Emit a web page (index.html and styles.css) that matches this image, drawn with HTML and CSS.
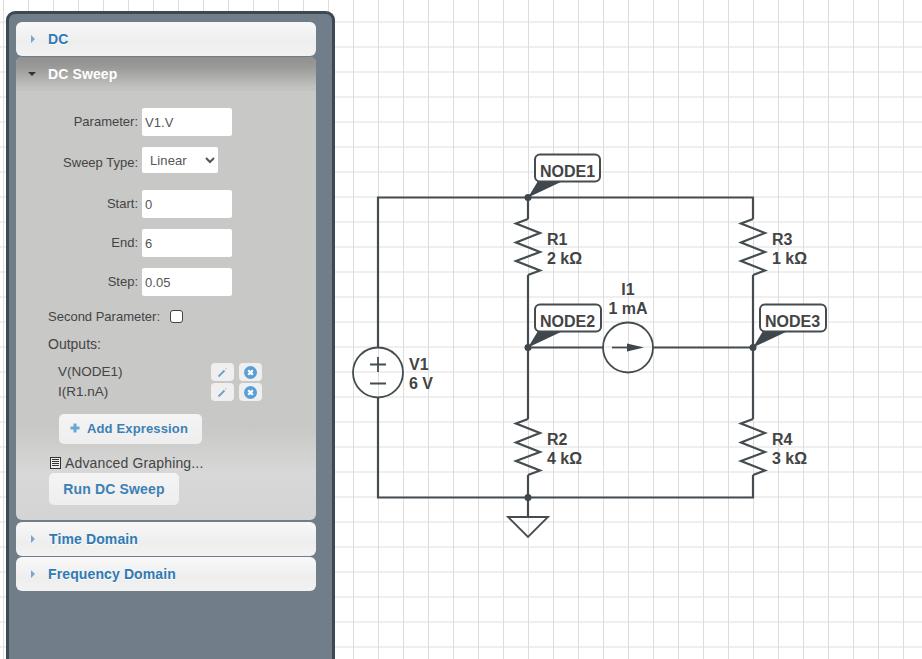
FILE: index.html
```html
<!DOCTYPE html>
<html lang="en">
<head>
    <meta charset="UTF-8">
    <title>Circuit Simulator</title>
    <link rel="stylesheet" href="styles.css">
</head>
<body>
    <aside class="panel">
        <div class="acc-header"><span class="arrow"></span><span class="acc-title">DC</span></div>

        <div class="acc-open">
            <div class="acc-open-header"><span class="arrow-down"></span><span>DC Sweep</span></div>
            <div class="form">
                <div class="row row-param"><label>Parameter:</label><input class="field" type="text" value="V1.V"></div>
                <div class="row row-select">
                    <label>Sweep Type:</label>
                    <select class="select"><option>Linear</option></select>
                </div>
                <div class="row row-start"><label>Start:</label><input class="field" type="text" value="0"></div>
                <div class="row row-end"><label>End:</label><input class="field" type="text" value="6"></div>
                <div class="row row-step"><label>Step:</label><input class="field" type="text" value="0.05"></div>
            </div>
            <div class="second">Second Parameter: <span class="check"></span></div>
            <div class="outputs-label">Outputs:</div>
            <div class="outputs">
                <div class="output">
                    <span class="output-name">V(NODE1)</span>
                    <span class="mini"><svg width="11" height="11" viewBox="0 0 11 11"><path d="M1.5 9.5 L7.5 3.5" stroke="#6f9fc6" stroke-width="1.8"/><path d="M9 1 l.6 .9 -.6 .7 -.6 -.7z" fill="#6f9fc6"/></svg></span>
                    <span class="mini"><svg width="13" height="13" viewBox="0 0 13 13"><circle cx="6.5" cy="6.5" r="6.5" fill="#5b9fd6"/><path d="M4.2 4.2 L8.8 8.8 M8.8 4.2 L4.2 8.8" stroke="#fff" stroke-width="2.2"/></svg></span>
                </div>
                <div class="output">
                    <span class="output-name">I(R1.nA)</span>
                    <span class="mini"><svg width="11" height="11" viewBox="0 0 11 11"><path d="M1.5 9.5 L7.5 3.5" stroke="#6f9fc6" stroke-width="1.8"/><path d="M9 1 l.6 .9 -.6 .7 -.6 -.7z" fill="#6f9fc6"/></svg></span>
                    <span class="mini"><svg width="13" height="13" viewBox="0 0 13 13"><circle cx="6.5" cy="6.5" r="6.5" fill="#5b9fd6"/><path d="M4.2 4.2 L8.8 8.8 M8.8 4.2 L4.2 8.8" stroke="#fff" stroke-width="2.2"/></svg></span>
                </div>
            </div>
            <button class="btn btn-add"><svg width="10" height="10" viewBox="0 0 10 10"><path d="M5 .5 V9.5 M.5 5 H9.5" stroke="#6aa5d3" stroke-width="3"/></svg>Add Expression</button>
            <div class="advanced">
                <svg width="11" height="12" viewBox="0 0 11 12"><rect x=".5" y=".5" width="10" height="11" fill="#eee" stroke="#333"/><path d="M2 2.5 H9 M2 4.5 H9 M2 6.5 H9 M2 8.5 H9" stroke="#333"/></svg>
                Advanced Graphing...
            </div>
            <button class="btn btn-run">Run DC Sweep</button>
        </div>

        <div class="acc-header acc-time"><span class="arrow"></span><span class="acc-title">Time Domain</span></div>
        <div class="acc-header acc-freq"><span class="arrow"></span><span class="acc-title">Frequency Domain</span></div>
    </aside>

    <svg class="circuit" width="587" height="659" viewBox="335 0 587 659">
        <!-- wires -->
        <g class="wire">
            <path d="M378 347.5 V197.5 H753 V219"/>
            <path d="M378 397.5 V497.5 H753 V475"/>
            <path d="M528 197.5 V219"/>
            <path d="M528 275 V419"/>
            <path d="M528 475 V517"/>
            <path d="M753 275 V419"/>
            <path d="M528 347.5 H603"/>
            <path d="M653 347.5 H753"/>
        </g>

        <!-- resistors -->
        <g class="wire">
            <path d="M528 219 L516 223.5 L540 233 L516 242.5 L540 252 L516 261 L540 270.5 L528 275"/>
            <path d="M528 419 L516 423.5 L540 433 L516 442.5 L540 452 L516 461 L540 470.5 L528 475"/>
            <path d="M753 219 L741 223.5 L765 233 L741 242.5 L765 252 L741 261 L765 270.5 L753 275"/>
            <path d="M753 419 L741 423.5 L765 433 L741 442.5 L765 452 L741 461 L765 470.5 L753 475"/>
        </g>

        <!-- V1 -->
        <g class="wire thin">
            <circle cx="378" cy="372.5" r="25"/>
            <path d="M370 364.5 H386 M378 357 V372 M370 383.5 H386"/>
        </g>

        <!-- I1 -->
        <g class="wire thin">
            <circle cx="628" cy="347.5" r="25"/>
            <path d="M612 347.5 H630"/>
        </g>
        <path class="solid" d="M627 343.5 L644 347.5 L627 351.5 Z"/>

        <!-- ground -->
        <path class="wire thin" d="M508 517 H548 L528 537 Z"/>

        <!-- junctions -->
        <circle class="solid" cx="528" cy="197.5" r="3.5"/>
        <circle class="solid" cx="528" cy="347.5" r="3.5"/>
        <circle class="solid" cx="753" cy="347.5" r="3.5"/>
        <circle class="solid" cx="528" cy="497.5" r="3.5"/>

        <!-- node labels -->
        <path class="solid" d="M528 197.5 L538 181 L563 181 Z"/>
        <path class="solid" d="M528 347.5 L538 331 L563 331 Z"/>
        <path class="solid" d="M753 347.5 L763 331 L788 331 Z"/>
        <rect class="tag" x="535" y="154.5" width="65" height="27" rx="5"/>
        <rect class="tag" x="535" y="304.5" width="66" height="27" rx="5"/>
        <rect class="tag" x="760" y="304.5" width="66" height="27" rx="5"/>
        <text class="lbl" x="540" y="177">NODE1</text>
        <text class="lbl" x="540" y="327">NODE2</text>
        <text class="lbl" x="765" y="327">NODE3</text>

        <text class="lbl" x="547" y="245">R1</text>
        <text class="lbl" x="547" y="264">2 kΩ</text>
        <text class="lbl" x="772" y="245">R3</text>
        <text class="lbl" x="772" y="264">1 kΩ</text>
        <text class="lbl" x="547" y="445">R2</text>
        <text class="lbl" x="547" y="464">4 kΩ</text>
        <text class="lbl" x="772" y="445">R4</text>
        <text class="lbl" x="772" y="464">3 kΩ</text>
        <text class="lbl" x="409" y="370">V1</text>
        <text class="lbl" x="409" y="389">6 V</text>
        <text class="lbl mid" x="628" y="295">I1</text>
        <text class="lbl mid" x="628" y="314">1 mA</text>
    </svg>
</body>
</html>
```

FILE: styles.css
```css
html, body {
    margin: 0;
    height: 100%;
    overflow: hidden;
}
body {
    display: flex;
    align-items: flex-start;
    font-family: "Liberation Sans", Arial, sans-serif;
    color: #444;
    background-color: #fff;
    background-image:
        linear-gradient(to right, #ddd 1px, transparent 1px),
        linear-gradient(to bottom, #efefef 2px, transparent 2px);
    background-size: 25px 25px;
    background-position: 3px 0, 0 21px;
}

/* left panel */
.panel {
    box-sizing: border-box;
    width: 329px;
    height: 660px;
    margin: 11px 0 0 6px;
    padding: 8px 16px 0 7px;
    background: #717e8a;
    border: 3px solid #3e4853;
    border-bottom: none;
    border-radius: 9px 9px 0 0;
    flex-shrink: 0;
}
.acc-header {
    box-sizing: border-box;
    height: 34px;
    display: flex;
    align-items: center;
    background: linear-gradient(#f8f8f8, #eeeeee 60%, #f2f2f2);
    border-radius: 6px;
    font-size: 14px;
    font-weight: bold;
    letter-spacing: .12px;
    color: #2f7ab5;
    text-shadow: 0 1px 0 #fff;
}
.acc-time { margin-top: 2px; }
.acc-freq { margin-top: 1px; }
.arrow {
    width: 0;
    height: 0;
    margin: 0 13px 0 15px;
    border-left: 4px solid #7aa6c9;
    border-top: 4px solid transparent;
    border-bottom: 4px solid transparent;
}
.acc-time .acc-title { margin-left: 1px; }

/* open section */
.acc-open {
    box-sizing: border-box;
    height: 463px;
    margin-top: 1px;
    border-radius: 6px;
    background: linear-gradient(#c8c8c6, #c8c8c6 80%, #d8d8d8 90%, #d4d4d4);
}
.acc-open-header {
    height: 34px;
    display: flex;
    align-items: center;
    border-radius: 6px 6px 0 0;
    background: linear-gradient(#8f8f8d, #9a9a98 30%, #c2c2c0 90%);
    font-size: 14px;
    font-weight: bold;
    letter-spacing: .12px;
    color: #fff;
}
.arrow-down {
    width: 0;
    height: 0;
    margin: 0 12px 0 12px;
    border-top: 4px solid #333;
    border-left: 4px solid transparent;
    border-right: 4px solid transparent;
}
.form {
    padding-top: 17px;
}
.row {
    display: flex;
    align-items: center;
    gap: 4px;
    margin-bottom: 11px;
    font-size: 13px;
    color: #444;
}
.row label {
    width: 122px;
    text-align: right;
    margin-top: -1px;
}
.field {
    box-sizing: border-box;
    width: 90px;
    height: 28px;
    padding: 2px 3px;
    border: none;
    border-radius: 2px;
    background: #fff;
    font-family: "Liberation Sans", Arial, sans-serif;
    font-size: 13px;
    letter-spacing: .1px;
    color: #555;
}
.row-select { height: 26px; margin-bottom: 17px; }
.row-select label { margin-top: 5px; }
.select {
    box-sizing: border-box;
    width: 76px;
    height: 26px;
    padding-left: 4px;
    border: none;
    border-radius: 2px;
    background: #fff;
    font-family: "Liberation Sans", Arial, sans-serif;
    font-size: 13px;
    letter-spacing: .1px;
    color: #555;
}
.second {
    display: flex;
    align-items: center;
    gap: 10px;
    margin: -1px 0 0 32px;
    height: 20px;
    font-size: 13px;
}
.check {
    box-sizing: border-box;
    width: 13px;
    height: 13px;
    border: 1px solid #444;
    border-radius: 3px;
    background: #fff;
}
.outputs-label {
    margin: 8px 0 0 32px;
    height: 20px;
    line-height: 20px;
    font-size: 14px;
}
.outputs {
    margin: 9px 0 0 42px;
}
.output {
    display: flex;
    align-items: center;
    gap: 5px;
    height: 18px;
    margin-bottom: 2px;
    font-size: 13.5px;
}
.output-name { width: 148px; margin-top: -2px; }
.mini {
    box-sizing: border-box;
    width: 23px;
    height: 18px;
    display: flex;
    align-items: center;
    justify-content: center;
    border-radius: 4px;
    background: #efefef;
}
.btn {
    display: flex;
    align-items: center;
    justify-content: center;
    border: none;
    border-radius: 5px;
    background: linear-gradient(#f4f4f4, #eeeeee);
    font-family: "Liberation Sans", Arial, sans-serif;
    font-size: 14px;
    font-weight: bold;
    letter-spacing: .15px;
    color: #3d80b5;
    padding: 0;
}
.btn-add {
    width: 143px;
    height: 30px;
    margin: 13px 0 0 43px;
    padding: 0 3px 2px 0;
    gap: 7px;
    font-size: 13px;
}
.advanced {
    display: flex;
    align-items: center;
    gap: 4px;
    height: 18px;
    margin: 10px 0 0 34px;
    font-size: 14px;
    letter-spacing: .15px;
    color: #444;
}
.btn-run {
    width: 130px;
    height: 32px;
    margin: 1px 0 0 33px;
}

/* circuit */
.circuit {
    display: block;
    flex-shrink: 0;
}
.wire {
    fill: none;
    stroke: #444c50;
    stroke-width: 2.2;
    stroke-linejoin: miter;
}
.wire.thin {
    stroke-width: 1.8;
}
.solid {
    fill: #3f474c;
}
.tag {
    fill: #fff;
    stroke: #444c50;
    stroke-width: 2;
}
.lbl {
    font-family: "Liberation Sans", Arial, sans-serif;
    font-size: 16px;
    font-weight: bold;
    fill: #444;
}
.mid {
    text-anchor: middle;
}
```
